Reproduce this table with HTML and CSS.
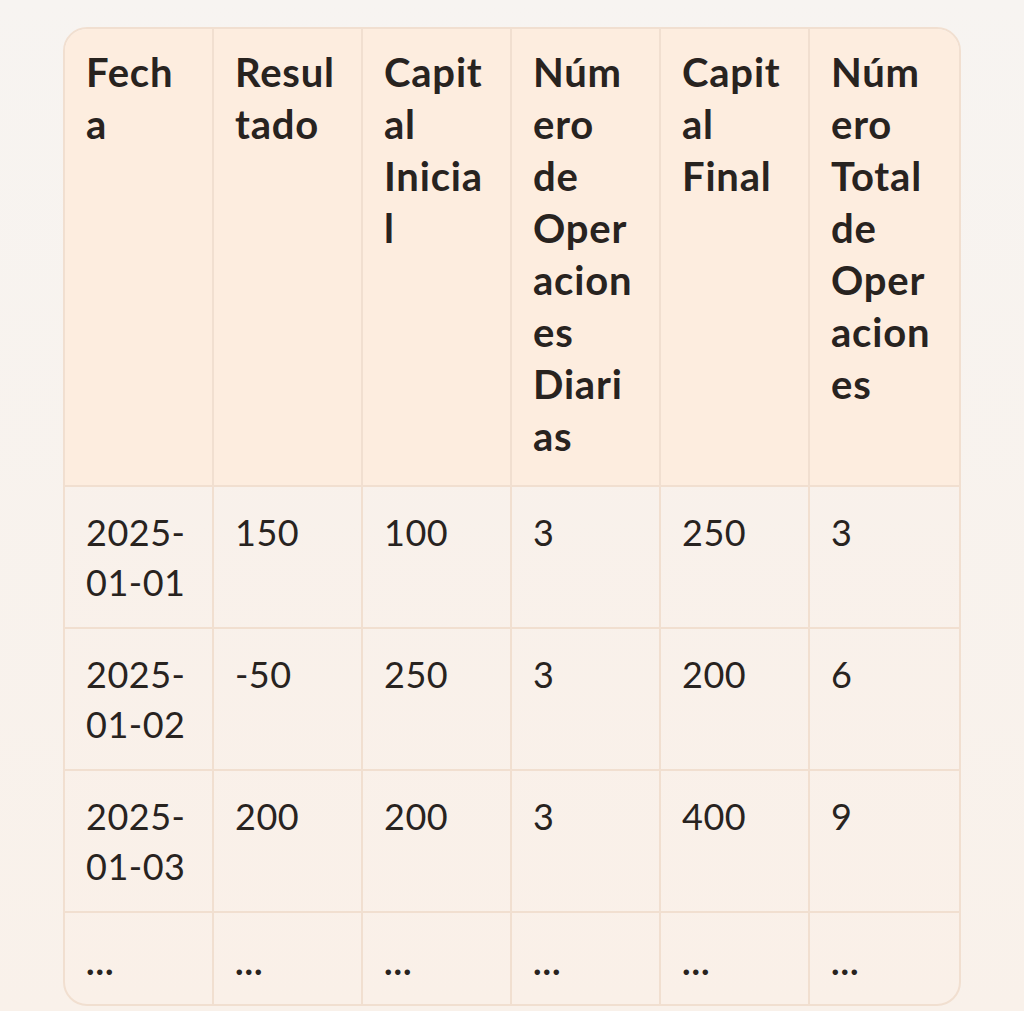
FILE: index.html
```html
<!DOCTYPE html>
<html lang="es">
<head>
<meta charset="utf-8">
<link rel="stylesheet" href="styles.css">
</head>
<body>
<div class="wrap">
<table class="tbl">
<thead>
<tr><th>Fecha</th><th>Resultado</th><th>Capital Inicial</th><th>Número de Operaciones Diarias</th><th>Capital Final</th><th>Número Total de Operaciones</th></tr>
</thead>
<tbody>
<tr><td>2025-01-01</td><td>150</td><td>100</td><td>3</td><td>250</td><td>3</td></tr>
<tr><td>2025-01-02</td><td>-50</td><td>250</td><td>3</td><td>200</td><td>6</td></tr>
<tr><td>2025-01-03</td><td>200</td><td>200</td><td>3</td><td>400</td><td>9</td></tr>
<tr class="more"><td>...</td><td>...</td><td>...</td><td>...</td><td>...</td><td>...</td></tr>
</tbody>
</table>
</div>
</body>
</html>
```
FILE: styles.css
```css
html, body { margin: 0; padding: 0; }
body {
  background: linear-gradient(180deg, #f7f4f1 0%, #f9f1ea 100%);
  min-height: 1011px;
  font-family: "Lato", "Noto Sans", sans-serif;
  color: #28231f;
}
.wrap {
  padding: 27px 63px 0 63px;
}
.tbl {
  width: 898px;
  table-layout: fixed;
  border-collapse: separate;
  border-spacing: 0;
  border: 2px solid #f1dfd0;
  border-radius: 24px;
  overflow: hidden;
  background: linear-gradient(180deg, #f7f2ee 0%, #faf0e8 100%);
}
.tbl th, .tbl td {
  text-align: left;
  vertical-align: top;
  padding: 20px 25px 20px 21px;
  overflow-wrap: anywhere;
  border-right: 2px solid #f1dfd0;
  border-bottom: 2px solid #f1dfd0;
}
.tbl th:last-child, .tbl td:last-child { border-right: none; }
.tbl tbody tr:last-child td { border-bottom: none; }
.tbl th {
  background: #fdeddf;
  font-size: 40px;
  line-height: 52px;
  font-weight: 700;
  letter-spacing: 0.8px;
  padding-top: 17px;
  padding-bottom: 23px;
}
.tbl td {
  font-size: 36px;
  line-height: 50px;
  font-weight: 400;
  letter-spacing: 0.5px;
}
.tbl .more td {
  font-weight: 700;
  letter-spacing: 1px;
  padding-top: 23px;
  padding-bottom: 18px;
}
```
